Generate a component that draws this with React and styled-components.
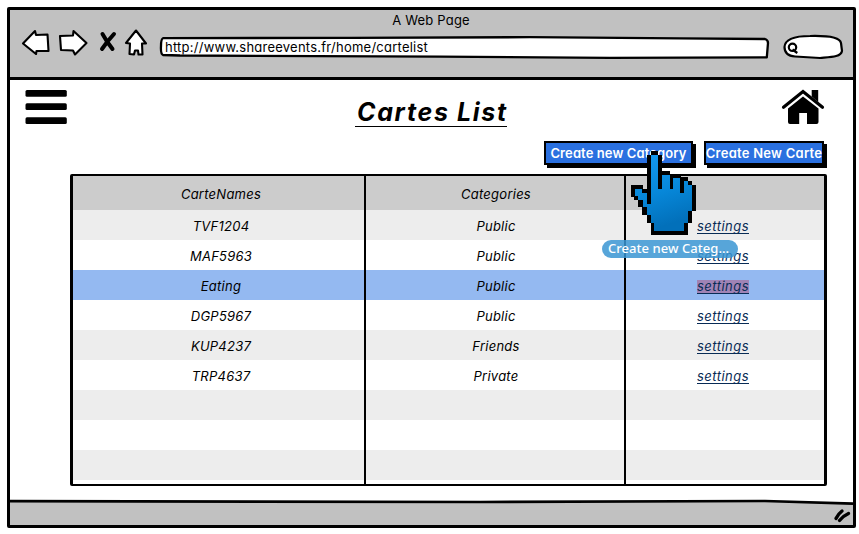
import React from "react";
import styled, { createGlobalStyle } from "styled-components";

const GlobalStyle = createGlobalStyle`
  * { box-sizing: border-box; }
  html, body { margin: 0; background: #fff; }
  body {
    font-family: Inter, "Liberation Sans", sans-serif;
    font-feature-settings: "cv11" 1;
    font-size: 13px;
    color: #000;
    overflow: hidden;
  }
`;

const Page = styled.div`
  width: 859px;
  height: 534px;
  padding: 7px 3px 6px 7px;
`;

const BrowserWindow = styled.div`
  width: 849px;
  height: 521px;
  border: 3px solid #000;
  border-radius: 2px;
  display: flex;
  flex-direction: column;
  background: #fff;
`;

const Chrome = styled.header`
  height: 70px;
  flex: none;
  background: #c1c1c1;
  border-bottom: 3px solid #000;
`;

const WindowTitle = styled.div`
  height: 22px;
  line-height: 20px;
  text-align: center;
  padding-right: 1px;
  letter-spacing: 0.2px;
`;

const Toolbar = styled.div`
  display: flex;
  align-items: flex-start;
  height: 34px;
  padding-left: 11px;
`;

const NavIcons = styled.svg`
  width: 132px;
  height: 34px;
  margin-top: -6px;
  flex: none;
`;

const Field = styled.div`
  position: relative;
  width: ${(p) => p.$width}px;
  height: 28px;
  margin-left: ${(p) => p.$gap}px;
  flex: none;
`;

const FieldOutline = styled.svg`
  position: absolute;
  inset: 0;
  width: 100%;
  height: 100%;
  overflow: visible;
`;

const Url = styled.span`
  position: relative;
  display: block;
  padding-left: 6px;
  line-height: 31px;
  letter-spacing: 0.24px;
  white-space: nowrap;
`;

const Content = styled.main`
  flex: 1;
  padding: 8px 26px 0 15px;
  min-height: 0;
`;

const Heading = styled.div`
  display: flex;
  justify-content: space-between;
  height: 53px;
`;

const MenuIcon = styled.svg`
  width: 43px;
  height: 38px;
`;

const HomeIcon = styled.svg`
  width: 46px;
  height: 40px;
`;

const Title = styled.h1`
  margin: 8px 0 0 13px;
  width: 152px;
  height: 31px;
  padding-left: 2px;
  border-bottom: 1px solid #000;
  font-size: 25px;
  line-height: 33px;
  font-weight: 700;
  font-style: italic;
  letter-spacing: 1.65px;
  white-space: nowrap;
`;

const Actions = styled.div`
  display: flex;
  justify-content: flex-end;
  gap: 11px;
  height: 35px;
  padding-right: 3px;
`;

const ActionButton = styled.button`
  width: ${(p) => p.$width}px;
  height: 24px;
  padding: 0;
  border: 2px solid #000;
  background: #2a70e0;
  box-shadow: 3px 3px 0 #000;
  color: #fff;
  font: 600 13px/20px Inter, "Liberation Sans", sans-serif;
  font-feature-settings: "cv11" 1;
  letter-spacing: ${(p) => p.$spacing}px;
  white-space: nowrap;
  display: flex;
  justify-content: center;
`;

const Table = styled.div`
  margin-left: 45px;
  width: 757px;
  height: 312px;
  border: 2px solid #000;
  border-left-width: 3px;
  border-right-width: 3px;
  border-radius: 2px;
  margin-top: -2px;
`;

const Row = styled.div`
  display: grid;
  grid-template-columns: 293px 260px 1fr;
  height: ${(p) => p.$height || 30}px;
  background: ${(p) => p.$fill};
`;

const Cell = styled.div`
  display: flex;
  align-items: center;
  justify-content: center;
  font-style: italic;
  letter-spacing: 0.25px;
  border-right: ${(p) => (p.$last ? 0 : "2px solid #000")};
  padding-left: ${(p) => p.$shift || 0}px;
  padding-right: ${(p) => (p.$last ? 4 : 0)}px;
  padding-top: ${(p) => (p.$last ? 3 : 1)}px;
`;

const SettingsLink = styled.a`
  height: 14px;
  line-height: 13px;
  color: #082b55;
  border-bottom: 1px solid #082b55;
  letter-spacing: 0.5px;
  background: ${(p) => (p.$marked ? "#a083b5" : "transparent")};
`;

const StatusBar = styled.footer`
  position: relative;
  height: 25px;
  flex: none;
  background: #c1c1c1;
`;

const StatusArt = styled.svg`
  position: absolute;
  left: 0;
  top: -4px;
  width: 843px;
  height: 29px;
`;

const Pointer = styled.svg`
  position: absolute;
  left: 620px;
  top: 145px;
  width: 100px;
  height: 100px;
`;

const Tooltip = styled.div`
  position: absolute;
  left: 602px;
  top: 240px;
  width: 136px;
  height: 18px;
  padding-left: 6px;
  border-radius: 9px;
  background: rgba(58, 149, 210, 0.85);
  color: #fff;
  font: 500 13px/17px "Noto Sans", "Open Sans", sans-serif;
  letter-spacing: 0.05px;
  white-space: nowrap;
`;

const rows = [
  ["TVF1204", "Public"],
  ["MAF5963", "Public"],
  ["Eating", "Public"],
  ["DGP5967", "Public"],
  ["KUP4237", "Friends"],
  ["TRP4637", "Private"],
  [],
  [],
  [],
];

const rowFill = (i) => (i === 2 ? "#94b9f1" : i % 2 === 0 ? "#ededed" : "#fff");

export default function App() {
  return (
    <Page>
      <GlobalStyle />
      <BrowserWindow>
        <Chrome>
          <WindowTitle>A Web Page</WindowTitle>
          <Toolbar>
            <NavIcons viewBox="21 26 132 34" fill="#fff" stroke="#000" strokeWidth="2.1" strokeLinejoin="round" strokeLinecap="round">
              <path d="M23 43.5 L35 31 L36 35 L47.5 34.5 L48.5 51 L36.5 51 L36 54 Z" />
              <path d="M60 36 L73 35.5 L73.5 31 L86.5 43 L75 54.5 L73 50.5 L61 50 Z" />
              <path d="M102.5 34 L107 41.5 L112.5 49 M114 34 L107.5 41.5 L102 49" strokeWidth="4" />
              <path d="M136 30.5 L126 43 L130 43.5 L129.5 54 L134 54.5 L135 50.5 L138 50.5 L138.5 54.5 L142.5 54.5 L142 43.5 L146 43.5 Z" />
            </NavIcons>
            <Field $width={612} $gap={6}>
              <FieldOutline viewBox="159 32 612 28" fill="#fff" stroke="#000" strokeWidth="2.3" strokeLinejoin="round">
                <path d="M163 38.2 L350 37.8 L530 37.2 L680 38.3 L765 39 Q768 40 768 43 L766.8 57.3 L610 57.8 L440 56.7 L180 55.5 L163 55 Q160.5 54 161 46 Q161 39 163 38.2 Z" />
              </FieldOutline>
              <Url>http://www.shareevents.fr/home/cartelist</Url>
            </Field>
            <Field $width={64} $gap={10}>
              <FieldOutline viewBox="781 32 64 28" fill="#fff" stroke="#000" strokeWidth="2.2" strokeLinejoin="round">
                <path d="M784.5 47 C785 39 795 36 810 36 C829 35.5 840 38 841 43 L842 51 C841 57 831 57 820 58 L795 56.5 C788 56 784.5 53 784.5 47 Z" />
                <circle cx="792.5" cy="47.3" r="3.7" fill="none" />
                <path d="M792.5 49.5 L797.3 53" />
              </FieldOutline>
            </Field>
          </Toolbar>
        </Chrome>
        <Content>
          <Heading>
            <MenuIcon viewBox="25 88 43 38" aria-label="Menu">
              <rect x="25.5" y="90" width="41.3" height="6.7" rx="1.5" />
              <rect x="25.5" y="103.2" width="41.3" height="6.7" rx="1.5" />
              <rect x="25.5" y="117.2" width="41.3" height="6.7" rx="1.5" />
            </MenuIcon>
            <Title>Cartes List</Title>
            <HomeIcon viewBox="781 88 46 40" aria-label="Home">
              <path d="M811.7 90 H818.2 V102 L811.7 96.5 Z" />
              <path d="M783.5 107.3 L803 91.5 L822.5 107.3" fill="none" stroke="#000" strokeWidth="3.2" strokeLinecap="round" />
              <path d="M788 108.5 L803 96.5 L818.5 108.5 V122 Q818.5 124 816.5 124 H807 V113 H799.2 V124 H790 Q788 124 788 122 Z" />
            </HomeIcon>
          </Heading>
          <Actions>
            <ActionButton $width={149} $spacing={0.1}>Create new Category</ActionButton>
            <ActionButton $width={120} $spacing={0.25}>Create New Carte</ActionButton>
          </Actions>
          <Table>
            <Row $fill="#ccc" $height={34}>
              <Cell $shift={5}>CarteNames</Cell>
              <Cell $shift={2}>Categories</Cell>
              <Cell $last />
            </Row>
            {rows.map(([name, category], i) => (
              <Row key={i} $fill={rowFill(i)}>
                <Cell $shift={5}>{name}</Cell>
                <Cell $shift={2}>{category}</Cell>
                <Cell $last>{name && <SettingsLink $marked={i === 2}>settings</SettingsLink>}</Cell>
              </Row>
            ))}
            <Row $fill="#fff" $height={4}>
              <Cell />
              <Cell />
              <Cell $last />
            </Row>
          </Table>
        </Content>
        <StatusBar>
          <StatusArt viewBox="10 496 843 29">
            <path d="M10 496 H853 V503 L760 501 L10 501 Z" fill="#fff" />
            <path d="M10 501.2 L480 502 L765 501 L853 503.7" fill="none" stroke="#000" strokeWidth="2.7" />
            <path d="M836 518.5 Q838 514 842 511 M839.5 520.5 Q843 516 848.5 513.5" fill="none" stroke="#000" strokeWidth="3.4" strokeLinecap="round" />
          </StatusArt>
        </StatusBar>
      </BrowserWindow>
      <Pointer viewBox="0 0 300 300" shapeRendering="crispEdges">
        <defs>
          <linearGradient id="handFill" x1="0" y1="0" x2="0.25" y2="1">
            <stop offset="0" stopColor="#159af0" />
            <stop offset="0.55" stopColor="#0788da" />
            <stop offset="1" stopColor="#0270ba" />
          </linearGradient>
        </defs>
        <path d="M92 17H113V29H125V77H149V89H184V97H205V109H217V121H228V197H216V233H205V270H92V233H80V210H67V186H55V165H43V156H34V121H70V133H80V29H92Z" />
        <path d="M92 29H113V132H125V89H149V132H160V98H181V143H193V109H205V121H216V197H205V233H193V258H103V233H92V210H80V186H68V165H55V154H46V133H67V145H80V177H92Z" fill="url(#handFill)" />
      </Pointer>
      <Tooltip>Create new Categ...</Tooltip>
    </Page>
  );
}
